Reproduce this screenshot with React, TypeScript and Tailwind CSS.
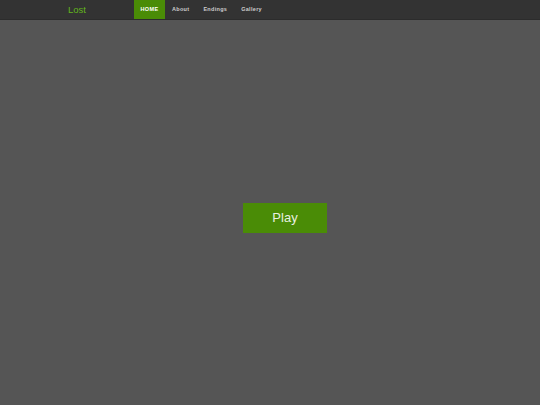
export default function App() {
  const links = ["About", "Endings", "Gallery"];
  return (
    <div className="min-h-screen bg-[#555555] font-['Liberation_Sans',Arial,sans-serif]">
      <nav className="h-[20px] bg-[#333333] border-b border-[#2c2c2c] flex items-stretch">
        <div className="w-[134px] pl-[68px] flex items-center">
          <span className="text-[#62b51c] text-[9.5px] leading-none">Lost</span>
        </div>
        <span className="w-[31px] bg-[#4a8c06] text-white text-[5.5px] font-bold tracking-[0.4px] flex items-center justify-center">
          HOME
        </span>
        {links.map((l) => (
          <span
            key={l}
            className="px-[7px] text-[#cccccc] text-[5.5px] font-bold tracking-[0.3px] flex items-center"
          >
            {l}
          </span>
        ))}
      </nav>
      <div className="flex justify-center pt-[183px] pl-[30px]">
        <button className="w-[84px] h-[30px] bg-[#4a8c06] text-[#e8f0e0] text-[13px]">
          Play
        </button>
      </div>
    </div>
  );
}
